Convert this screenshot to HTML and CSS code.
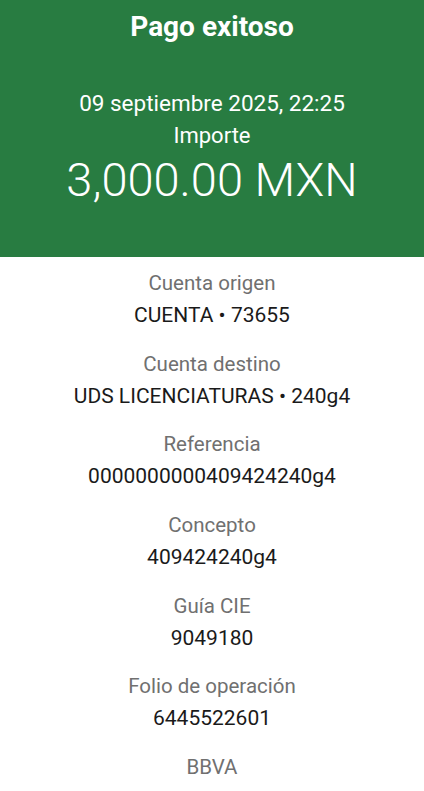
FILE: index.html
```html
<!DOCTYPE html>
<html lang="es">
<head>
  <meta charset="UTF-8">
  <meta name="viewport" content="width=device-width, initial-scale=1.0">
  <title>Pago exitoso</title>
  <link rel="stylesheet" href="styles.css">
</head>
<body>

  <header class="receipt-header">
    <h1 class="title">Pago exitoso</h1>
    <p class="date">09 septiembre 2025, 22:25</p>
    <p class="amount-label">Importe</p>
    <p class="amount">3,000.00 MXN</p>
  </header>

  <main class="details">
    <div class="detail">
      <p class="label">Cuenta origen</p>
      <p class="value">CUENTA • 73655</p>
    </div>
    <div class="detail">
      <p class="label">Cuenta destino</p>
      <p class="value">UDS LICENCIATURAS • 240g4</p>
    </div>
    <div class="detail">
      <p class="label">Referencia</p>
      <p class="value">0000000000409424240g4</p>
    </div>
    <div class="detail">
      <p class="label">Concepto</p>
      <p class="value">409424240g4</p>
    </div>
    <div class="detail">
      <p class="label">Guía CIE</p>
      <p class="value">9049180</p>
    </div>
    <div class="detail">
      <p class="label">Folio de operación</p>
      <p class="value">6445522601</p>
    </div>
    <div class="detail">
      <p class="label">BBVA</p>
    </div>
  </main>

</body>
</html>
```

FILE: styles.css
```css
body {
  margin: 0;
  font-family: Roboto, "Liberation Sans", sans-serif;
  text-align: center;
  background: #fff;
}

p {
  margin: 0;
}

.receipt-header {
  background-color: #287c41;
  color: #fff;
  height: 257px;
  box-sizing: border-box;
  padding-top: 11px;
}

.title {
  margin: 0;
  font-size: 28px;
  font-weight: 700;
  line-height: 32px;
}

.date {
  margin-top: 44px;
  font-size: 22.5px;
  line-height: 32px;
}

.amount-label {
  margin-top: 1px;
  font-size: 22px;
  line-height: 32px;
}

.amount {
  margin-top: 0;
  font-size: 47px;
  line-height: 56px;
  font-weight: 300;
}

.details {
  display: flex;
  flex-direction: column;
  gap: 24.7px;
  padding-top: 14px;
}

.label {
  color: #707070;
  font-size: 20.5px;
  line-height: 24px;
}

.value {
  margin-top: 8px;
  color: #1a1a1a;
  font-size: 21px;
  line-height: 24px;
}
```
